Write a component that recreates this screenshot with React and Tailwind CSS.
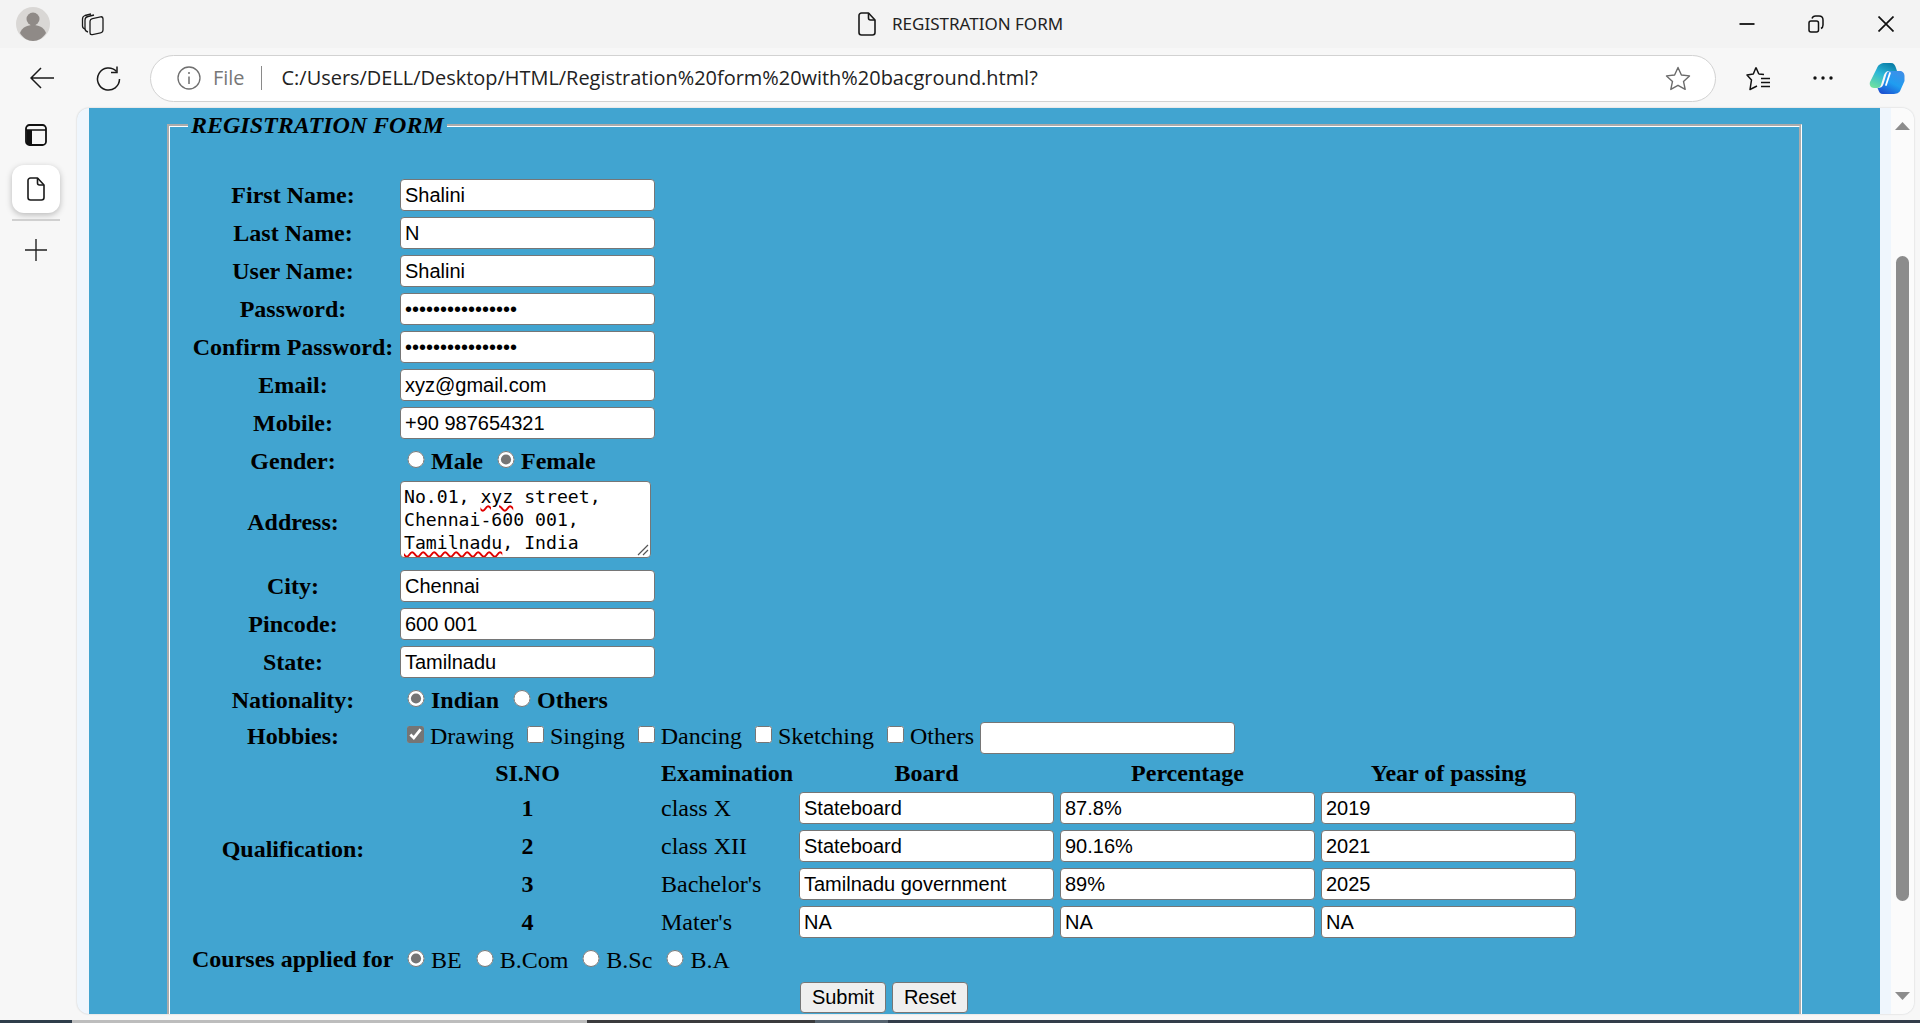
import { useState } from "react";

const textRows = [
  { label: "First Name:", value: "Shalini" },
  { label: "Last Name:", value: "N" },
  { label: "User Name:", value: "Shalini" },
  { label: "Password:", value: "••••••••••••••••", type: "password" },
  { label: "Confirm Password:", value: "••••••••••••••••", type: "password" },
  { label: "Email:", value: "xyz@gmail.com" },
  { label: "Mobile:", value: "+90 987654321" },
];

const qualifications = [
  { no: "1", exam: "class X", board: "Stateboard", pct: "87.8%", year: "2019" },
  { no: "2", exam: "class XII", board: "Stateboard", pct: "90.16%", year: "2021" },
  { no: "3", exam: "Bachelor's", board: "Tamilnadu government", pct: "89%", year: "2025" },
  { no: "4", exam: "Mater's", board: "NA", pct: "NA", year: "NA" },
];

function Field({ value, type = "text", className = "" }) {
  const [val, setVal] = useState(value);
  return (
    <input
      type={type}
      value={val}
      onChange={(e) => setVal(e.target.value)}
      className={`w-[255px] h-[32px] bg-white border border-[#767676] rounded-[4px] px-[4px] text-[20px] text-black font-['Liberation_Sans',Arial,sans-serif] ${className}`}
    />
  );
}

function Row({ label, height = "h-[38px]", className = "", children }) {
  return (
    <div className={`flex items-center ${height} ${className}`}>
      <div className="w-[202px] mr-[6px] text-center font-bold">{label}</div>
      {children}
    </div>
  );
}

function Choice({ type = "radio", name, text, checked, bold }) {
  return (
    <label className={`flex items-center gap-[6px] ${bold ? "font-bold" : ""}`}>
      <input
        type={type}
        name={name}
        defaultChecked={checked}
        className={`${type === "radio" ? "w-[18px]" : "w-[17px]"} h-[17px] m-0 -translate-y-[2px] accent-[#757575]`}
      />
      {text}
    </label>
  );
}

function TitleBar() {
  return (
    <div className="flex items-center h-12 bg-[#f3f3f3]">
      <div className="flex items-center w-[858px] pl-4">
        <svg width="34" height="34" viewBox="0 0 34 34">
          <circle cx="17" cy="17" r="17" fill="#d9d7d5" />
          <circle cx="17" cy="12" r="6.5" fill="#8f8a87" />
          <path d="M4 26c2-6 8-8 13-8s11 2 13 8c-3 5-8 8-13 8s-10-3-13-8z" fill="#8f8a87" />
        </svg>
        <svg className="ml-[31px]" width="24" height="24" viewBox="0 0 24 24" fill="none" stroke="#1a1a1a" strokeWidth="1.3" strokeLinejoin="round">
          <rect x="9" y="6" width="13" height="16" rx="2.5" transform="skewY(-12) translate(0 3)" />
          <path d="M7 20c-2-.5-3-1.500-3-3.500V8c0-2 1-3 3-3.500l6-1.500" />
          <path d="M4 17c-1.800-.5-2.500-1.500-2.500-3V7c0-2 1-3 2.500-3.500L10 2" />
        </svg>
      </div>
      <svg width="18" height="24" viewBox="0 0 18 24" fill="none" stroke="#1a1a1a" strokeWidth="1.6" strokeLinejoin="round">
        <path d="M3.500 1h7L17 8v12.500a2.500 2.500 0 0 1-2.500 2.500h-11A2.500 2.500 0 0 1 1 20.500v-17A2.500 2.500 0 0 1 3.500 1z" />
        <path d="M10.500 1v5a2 2 0 0 0 2 2H17" />
      </svg>
      <span className="ml-4 text-[17px] text-[#222] font-['Noto_Sans',sans-serif]">REGISTRATION FORM</span>
      <div className="flex flex-1 items-center justify-end pr-[26px]">
        <svg width="16" height="4" viewBox="0 0 16 4">
          <path d="M0.500 2h15" stroke="#111" strokeWidth="1.800" />
        </svg>
        <svg className="ml-[53px]" width="16" height="18" viewBox="0 0 16 18" fill="none" stroke="#111" strokeWidth="1.500">
          <rect x="1" y="6" width="9.500" height="11" rx="2" />
          <path d="M4 3.500c.5-1.500 1.500-2.500 3.500-2.500H11c2.500 0 4 1.500 4 4v5c0 2-1 3-2 3.500" />
        </svg>
        <svg className="ml-[54px]" width="16" height="16" viewBox="0 0 16 16" stroke="#111" strokeWidth="1.700">
          <path d="M0.500 0.500l15 15M15.500 0.500l-15 15" />
        </svg>
      </div>
    </div>
  );
}

function AddressBar() {
  return (
    <div className="flex items-center h-[60px] bg-[#f7f7f7]">
      <div className="flex items-center w-[150px] pl-[30px]">
        <svg width="24" height="22" viewBox="0 0 24 22" fill="none" stroke="#1a1a1a" strokeWidth="1.500">
          <path d="M1 11h23M11 1L1 11l10 10" />
        </svg>
        <svg className="ml-[42px]" width="25" height="25" viewBox="0 0 25 25" fill="none" stroke="#1a1a1a" strokeWidth="1.500">
          <path d="M20.500 5.500A11 11 0 1 0 23.500 13" />
          <path d="M21 0.500v6h-6" />
        </svg>
      </div>
      <div className="flex items-center w-[1566px] h-[47px] bg-white border border-[#d2d2d2] rounded-full pl-[26px] pr-[24px] font-['Open_Sans',sans-serif] text-[19.95px]">
        <svg width="24" height="24" viewBox="0 0 24 24" fill="none" stroke="#6f6f6f" strokeWidth="1.300">
          <circle cx="12" cy="12" r="11" />
          <path d="M12 10.500V18M12 6v2" strokeWidth="1.500" />
        </svg>
        <span className="ml-[12px] text-[#777]">File</span>
        <span className="ml-[16px] w-px h-[24px] bg-[#8a8a8a]" />
        <span className="ml-[20px] text-[#222] flex-1 whitespace-nowrap">C:/Users/DELL/Desktop/HTML/Registration%20form%20with%20bacground.html?</span>
        <svg width="26" height="25" viewBox="0 0 26 25" fill="none" stroke="#6b6b6b" strokeWidth="1.400" strokeLinejoin="round">
          <path d="M13 1.500l3.400 7.500 8.100.9-6 5.500 1.700 8-7.200-4.100-7.200 4.100 1.700-8-6-5.500 8.100-.9z" />
        </svg>
      </div>
      <svg className="ml-[30px]" width="26" height="25" viewBox="0 0 26 25" fill="none" stroke="#111" strokeWidth="1.500" strokeLinejoin="round">
        <path d="M10 1.500l2.800 6.500M18 8.500l-5.200-.5M10 1.500L7.300 8 1 9l4.500 5L4 23.500l7-3.500" />
        <path d="M15 12.500h9M15 16.500h9M15 20.500h9" />
      </svg>
      <svg className="ml-[41px]" width="20" height="4" viewBox="0 0 20 4" fill="#111">
        <circle cx="2" cy="2" r="1.700" />
        <circle cx="10" cy="2" r="1.700" />
        <circle cx="18" cy="2" r="1.700" />
      </svg>
      <svg className="ml-[36px]" width="36" height="33" viewBox="0 0 36 33">
        <defs>
          <linearGradient id="cpA" x1="0.700" y1="0" x2="0.200" y2="1">
            <stop offset="0" stopColor="#0b7fa8" />
            <stop offset="0.450" stopColor="#2bb6d8" />
            <stop offset="1" stopColor="#6fe0a0" />
          </linearGradient>
          <linearGradient id="cpB" x1="0.800" y1="0" x2="0.200" y2="1">
            <stop offset="0" stopColor="#3f8fe8" />
            <stop offset="0.500" stopColor="#1f9df0" />
            <stop offset="1" stopColor="#1b4fd0" />
          </linearGradient>
        </defs>
        <path d="M16 1h6c3 0 4 2 5 5l1 3h-8c-3 0-4 2-5 4l-3 10c-.5 2-2 3-4 3H5c-3 0-5-3-4-6L8 6c1-3 4-5 8-5z" fill="url(#cpA)" />
        <path d="M19 32h-5c-3 0-4-2-5-5l-.5-1c3 0 5-1 6-4l3-10c.5-2 2-3 4-3h9c3 0 5 2 5 5v5l-4 9c-1 3-4 4-8 4z" fill="url(#cpB)" />
        <path d="M21 11l-4 12" stroke="#fff" strokeWidth="1.800" strokeLinecap="round" />
      </svg>
    </div>
  );
}

function SideRail() {
  return (
    <div className="flex flex-col items-center w-[77px]">
      <svg className="mt-[16px] mr-[6px]" width="22" height="22" viewBox="0 0 22 22">
        <rect x="1" y="1" width="20" height="20" rx="3.500" fill="none" stroke="#111" strokeWidth="1.800" />
        <path d="M1 6h20" stroke="#111" strokeWidth="1.500" />
        <path d="M1.500 6H7v14.500H4a2.500 2.500 0 0 1-2.500-2.500z" fill="#111" />
      </svg>
      <div className="flex items-center justify-center w-[48px] h-[48px] mt-[19px] mr-[6px] bg-white rounded-[12px] shadow-[0_2px_6px_rgba(0,0,0,0.25)]">
        <svg width="18" height="24" viewBox="0 0 18 24" fill="none" stroke="#1a1a1a" strokeWidth="1.600" strokeLinejoin="round">
          <path d="M3.500 1h7L17 8v12.500a2.500 2.500 0 0 1-2.500 2.500h-11A2.500 2.500 0 0 1 1 20.500v-17A2.500 2.500 0 0 1 3.500 1z" />
          <path d="M10.500 1v5a2 2 0 0 0 2 2H17" />
        </svg>
      </div>
      <div className="w-[48px] h-[2px] mt-[6px] mr-[6px] bg-[#d0d0d0]" />
      <svg className="mt-[18px] mr-[6px]" width="22" height="22" viewBox="0 0 22 22" stroke="#222" strokeWidth="1.400">
        <path d="M0 11h22M11 0v22" />
      </svg>
    </div>
  );
}

function Scrollbar() {
  return (
    <div className="flex flex-col items-center w-[23px] bg-[#fbfbfb]">
      <svg className="mt-[14px]" width="15" height="8" viewBox="0 0 15 8" fill="#8c8c8c">
        <path d="M7.500 0L15 8H0z" />
      </svg>
      <div className="w-[13px] h-[645px] mt-[126px] bg-[#8c8c8c] rounded-full" />
      <svg className="mt-[91px]" width="15" height="8" viewBox="0 0 15 8" fill="#8c8c8c">
        <path d="M7.500 8L15 0H0z" />
      </svg>
    </div>
  );
}

function RegistrationForm() {
  return (
    <form className="h-full pt-[4px] font-['Liberation_Serif','Times_New_Roman',serif] text-[24px] leading-[27px] text-black">
      <fieldset className="w-[1635px] h-[1000px] ml-[78px] border-[3px] [border-style:groove] border-white">
        <legend className="ml-[18px] px-[3px] font-bold italic whitespace-nowrap">REGISTRATION FORM</legend>
        <div className="pt-[37px] pl-[22px]">
          {textRows.map((row) => (
            <Row key={row.label} label={row.label}>
              <Field value={row.value} type={row.type} />
            </Row>
          ))}

          <Row label="Gender:">
            <div className="flex items-center gap-[14px] pl-[7px]">
              <Choice name="gender" text="Male" bold />
              <Choice name="gender" text="Female" bold checked />
            </div>
          </Row>

          <div className="flex h-[87px]">
            <div className="w-[202px] mr-[6px] pt-[29px] text-center font-bold">Address:</div>
            {/* div instead of textarea so the spell check squiggles show */}
            <div className="relative w-[251px] h-[77px] mt-[1px] bg-white border border-[#767676] rounded-[4px] px-[3px] py-[3px] font-['DejaVu_Sans_Mono',monospace] text-[18.15px] leading-[23px] whitespace-pre overflow-hidden">
              <div>
                No.01, <span className="underline decoration-wavy decoration-[#e00000] decoration-[1.5px] underline-offset-2">xyz</span> street,
              </div>
              <div>Chennai-600 001,</div>
              <div>
                <span className="underline decoration-wavy decoration-[#e00000] decoration-[1.5px] underline-offset-2">Tamilnadu</span>, India
              </div>
              <svg className="absolute right-[1px] bottom-[1px]" width="12" height="12" viewBox="0 0 12 12" stroke="#555" strokeWidth="1.200">
                <path d="M1 11L11 1M6 11l5-5" />
              </svg>
            </div>
          </div>

          <Row label="City:">
            <Field value="Chennai" />
          </Row>
          <Row label="Pincode:">
            <Field value="600 001" />
          </Row>
          <Row label="State:">
            <Field value="Tamilnadu" />
          </Row>

          <Row label="Nationality:">
            <div className="flex items-center gap-[14px] pl-[7px]">
              <Choice name="nationality" text="Indian" bold checked />
              <Choice name="nationality" text="Others" bold />
            </div>
          </Row>

          <Row label="Hobbies:" height="h-[37px]" className="pb-[2px]">
            <div className="flex items-center gap-[13px] pl-[7px]">
              <Choice type="checkbox" text="Drawing" checked />
              <Choice type="checkbox" text="Singing" />
              <Choice type="checkbox" text="Dancing" />
              <Choice type="checkbox" text="Sketching" />
              <div className="flex items-center gap-[6px]">
                <Choice type="checkbox" text="Others" />
                <Field value="" className="translate-y-[1px]" />
              </div>
            </div>
          </Row>

          <div className="flex items-center">
            <div className="w-[202px] mr-[6px] pt-[2px] text-center font-bold">Qualification:</div>
            <div className="grid grid-cols-[255px_132px_255px_255px_255px] grid-rows-[33px_repeat(4,38px)] gap-x-[6px] items-center">
              <div className="pt-[2px] text-center font-bold">SI.NO</div>
              <div className="pt-[2px] font-bold whitespace-nowrap">Examination</div>
              <div className="pt-[2px] text-center font-bold">Board</div>
              <div className="pt-[2px] text-center font-bold">Percentage</div>
              <div className="pt-[2px] text-center font-bold">Year of passing</div>
              {qualifications.map((q) => (
                <div key={q.no} className="contents">
                  <div className="text-center font-bold">{q.no}</div>
                  <div>{q.exam}</div>
                  <Field value={q.board} />
                  <Field value={q.pct} />
                  <Field value={q.year} />
                </div>
              ))}
            </div>
          </div>

          <div className="flex items-center h-[38px]">
            <div className="w-[215px] font-bold whitespace-nowrap -translate-y-[1px]">Courses applied for</div>
            <div className="flex items-center gap-[14px]">
              <Choice name="course" text="BE" checked />
              <Choice name="course" text="B.Com" />
              <Choice name="course" text="B.Sc" />
              <Choice name="course" text="B.A" />
            </div>
          </div>

          <div className="flex items-center h-[36px] pl-[608px] gap-[6px] font-['Liberation_Sans',Arial,sans-serif] text-[20px]">
            <button type="button" className="w-[86px] h-[31px] bg-[#efefef] border border-[#767676] rounded-[4px]">Submit</button>
            <button type="reset" className="w-[76px] h-[31px] bg-[#efefef] border border-[#767676] rounded-[4px]">Reset</button>
          </div>
        </div>
      </fieldset>
    </form>
  );
}

export default function App() {
  return (
    <div className="flex flex-col w-[1920px] h-[1023px] overflow-hidden bg-[#f7f7f7]">
      <TitleBar />
      <AddressBar />
      <div className="flex h-[906px] pr-[6px]">
        <SideRail />
        <div className="flex flex-1 overflow-hidden rounded-[12px] bg-[#eff6fd] pl-[12px] shadow-[0_0_2px_rgba(0,0,0,0.2)]">
          <div className="w-[1791px] overflow-hidden bg-[#41a4d0]">
            <RegistrationForm />
          </div>
          <div className="w-[11px]" />
          <Scrollbar />
        </div>
      </div>
      <div className="flex h-[3px] mt-[6px]">
        <div className="w-[72px] bg-[#2f3d4a]" />
        <div className="w-[515px] bg-[#bdbdbd]" />
        <div className="w-[228px] bg-[#3b3b3d]" />
        <div className="w-[73px] bg-[#56636f]" />
        <div className="flex-1 bg-[#333d4a]" />
      </div>
    </div>
  );
}
